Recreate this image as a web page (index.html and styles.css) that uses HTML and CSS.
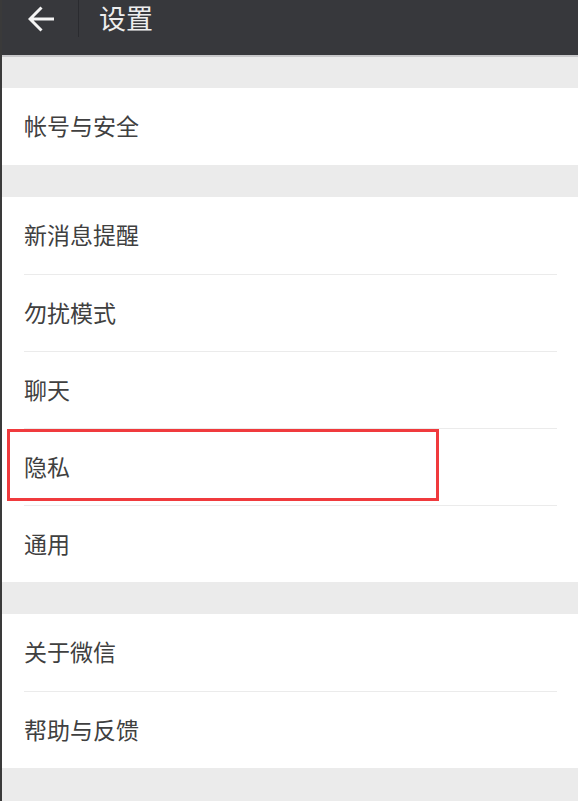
FILE: index.html
```html
<!DOCTYPE html>
<html lang="zh-CN">
<head>
    <meta charset="UTF-8">
    <meta name="viewport" content="width=device-width, initial-scale=1.0">
    <title>设置</title>
    <link rel="stylesheet" href="styles.css">
</head>
<body>
    <div class="screen">
        <!-- Top bar -->
        <div class="header">
            <div class="bar">
                <div class="back">
                    <svg class="backIcon" xmlns="http://www.w3.org/2000/svg" viewBox="0 0 26 26">
                        <path d="M13.5 1.5 L2 13 L13.5 24.5 M2 13 H26" />
                    </svg>
                </div>
                <div class="title">设置</div>
            </div>
        </div>

        <div class="gap first"></div>
        <div class="group">
            <div class="item">帐号与安全</div>
        </div>

        <div class="gap"></div>
        <div class="group">
            <div class="item">新消息提醒</div>
            <div class="item">勿扰模式</div>
            <div class="item">聊天</div>
            <div class="item">
                隐私
                <!-- Highlight drawn over the row -->
                <span class="mark"></span>
            </div>
            <div class="item">通用</div>
        </div>

        <div class="gap"></div>
        <div class="group">
            <div class="item">关于微信</div>
            <div class="item">帮助与反馈</div>
        </div>

        <div class="gap last"></div>
    </div>
</body>
</html>
```

FILE: styles.css
```css
body {
    margin: 0;
    background-color: #ffffff;
    font-family: "Noto Sans CJK SC", "Noto Sans", sans-serif;
}

.screen {
    width: 578px;
    min-height: 801px;
    box-sizing: border-box;
    border-left: 2px solid #3a3a3a;
    background-color: #ebebeb;
}

/* Top bar */
.header {
    height: 55px;
    background-color: #37383c;
    border-bottom: 2px solid #c8c8ca;
}

.bar {
    height: 37px;
    display: flex;
    align-items: center;
}

.back {
    width: 77px;
    height: 37px;
    box-sizing: border-box;
    padding-left: 26px;
    display: flex;
    align-items: center;
    border-right: 1px solid #2a2b2f;
}

.backIcon {
    width: 26px;
    height: 26px;
    fill: none;
    stroke: #f4f4f4;
    stroke-width: 3;
}

.title {
    margin-left: 20px;
    padding-bottom: 2px;
    font-size: 27px;
    line-height: 35px;
    color: #ededed;
}

/* Section spacing */
.gap {
    height: 32px;
}

.gap.first {
    height: 31px;
}

.gap.last {
    height: 33px;
}

.group {
    background-color: #ffffff;
}

.item {
    position: relative;
    height: 77px;
    box-sizing: border-box;
    margin: 0 21px 0 22px;
    padding-bottom: 3px;
    display: flex;
    align-items: center;
    font-size: 23px;
    color: #404040;
}

.item + .item {
    border-top: 1px solid #ebebeb;
}

.mark {
    position: absolute;
    left: -17px;
    top: 0;
    width: 432px;
    height: 72px;
    box-sizing: border-box;
    border: 3px solid #f03a3d;
}
```
